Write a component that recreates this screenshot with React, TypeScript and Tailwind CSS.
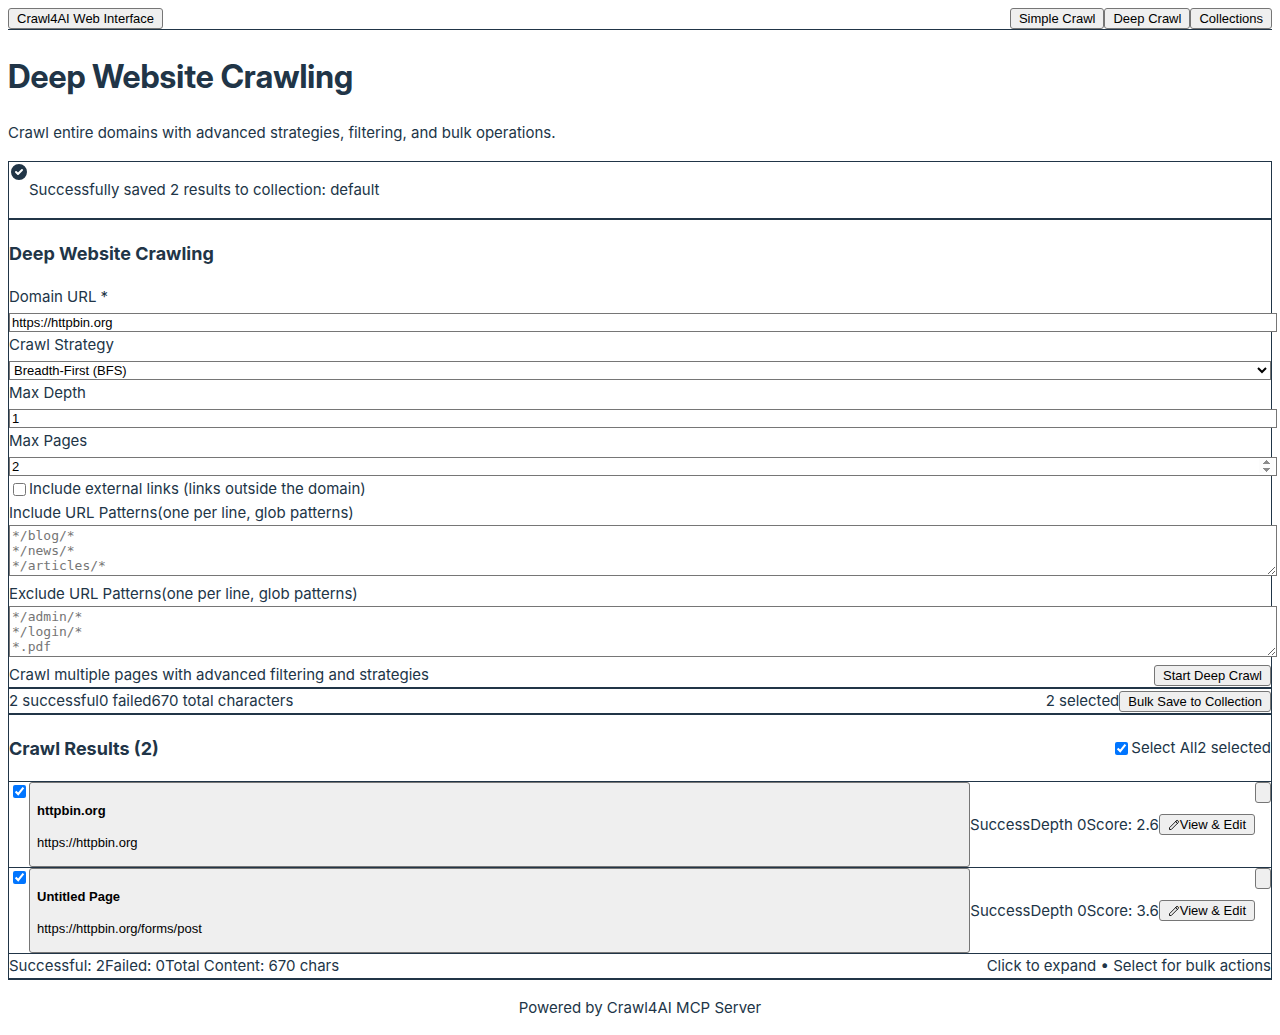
import React, { useState } from "react";

const buttonClass =
  "rounded-[3px] border border-[#767676] bg-[#efefef] px-2 py-[2px] font-['Liberation_Sans',sans-serif] text-[13px] leading-[15px] text-black";

const fieldClass =
  "mt-1 mb-px block w-[calc(100%+6px)] border border-[#767676] bg-white px-[2px] py-px font-['Liberation_Sans',sans-serif] text-[13px] leading-[15px] text-black";

const areaClass =
  "mb-[6px] block w-[calc(100%+6px)] resize border border-[#767676] bg-white p-[2px] font-['DejaVu_Sans_Mono',monospace] text-[13px] leading-[15px] text-black placeholder:text-[#757575]";

const checkboxClass = "ml-1 mr-[3px] size-[13px]";

function CheckCircleIcon() {
  return (
    <svg viewBox="0 0 20 20" fill="currentColor" className="size-5 shrink-0" aria-hidden="true">
      <path
        fillRule="evenodd"
        clipRule="evenodd"
        d="M10 18a8 8 0 100-16 8 8 0 000 16zm3.707-9.293a1 1 0 00-1.414-1.414L9 10.586 7.707 9.293a1 1 0 00-1.414 1.414l2 2a1 1 0 001.414 0l4-4z"
      />
    </svg>
  );
}

function PencilIcon() {
  return (
    <svg viewBox="0 0 24 24" fill="none" stroke="currentColor" className="size-3" aria-hidden="true">
      <path
        strokeLinecap="round"
        strokeLinejoin="round"
        strokeWidth={1.75}
        d="M15.232 5.232l3.536 3.536m-2.036-5.036a2.5 2.5 0 113.536 3.536L6.5 21.036H3v-3.572L16.732 3.732z"
      />
    </svg>
  );
}

type Result = { title: string; url: string; score: string };

const results: Result[] = [
  { title: "httpbin.org", url: "https://httpbin.org", score: "2.6" },
  { title: "Untitled Page", url: "https://httpbin.org/forms/post", score: "3.6" },
];

function ResultRow({ result }: { result: Result }) {
  return (
    <div className="flex items-start border-b border-[#213547]">
      <input
        type="checkbox"
        defaultChecked
        aria-label={`Select ${result.title}`}
        className={`${checkboxClass} mt-[3px]`}
      />
      <button
        type="button"
        className="min-w-0 flex-1 rounded-[3px] border border-[#767676] bg-[#efefef] px-[7px] pt-5 pb-4 text-left font-['Liberation_Sans',sans-serif] text-[13px] leading-[15px] text-black"
      >
        <span className="mb-[17px] block font-bold">{result.title}</span>
        <span className="block">{result.url}</span>
      </button>
      <div className="flex items-center self-stretch">
        <span>Success</span>
        <span>Depth 0</span>
        <span>Score: {result.score}</span>
        <button type="button" className={`${buttonClass} flex items-center`}>
          <PencilIcon />
          View &amp; Edit
        </button>
      </div>
      <button
        type="button"
        aria-label="Toggle details"
        className="h-[21px] w-4 rounded-[3px] border border-[#767676] bg-[#efefef]"
      />
    </div>
  );
}

export default function App() {
  const [strategy, setStrategy] = useState("bfs");

  return (
    <div className="p-2 font-[Inter,sans-serif] text-[15px] leading-6 text-[#213547]">
      <nav className="flex justify-between border-b border-[#213547]">
        <button type="button" className={buttonClass}>Crawl4AI Web Interface</button>
        <div className="flex">
          <button type="button" className={buttonClass}>Simple Crawl</button>
          <button type="button" className={buttonClass}>Deep Crawl</button>
          <button type="button" className={buttonClass}>Collections</button>
        </div>
      </nav>

      <main>
        <h1 className="mt-[23px] mb-5 font-['Inter_Display',Inter,sans-serif] text-[32px] leading-[48px] font-bold">
          Deep Website Crawling
        </h1>
        <p className="mb-4">Crawl entire domains with advanced strategies, filtering, and bulk operations.</p>

        <div role="status" className="flex border border-[#213547]">
          <CheckCircleIcon />
          <p className="my-4">Successfully saved 2 results to collection: default</p>
        </div>

        <form className="border border-[#213547]" onSubmit={(e) => e.preventDefault()}>
          <h3 className="mt-5 mb-[17px] text-lg leading-7 font-bold">Deep Website Crawling</h3>

          <label htmlFor="domain" className="block">Domain URL *</label>
          <input id="domain" type="url" defaultValue="https://httpbin.org" className={fieldClass} />

          <label htmlFor="strategy" className="block">Crawl Strategy</label>
          <select
            id="strategy"
            value={strategy}
            onChange={(e) => setStrategy(e.target.value)}
            className="mt-1 mb-px block h-[19px] w-full border border-[#767676] bg-white font-['Liberation_Sans',sans-serif] text-[13px] leading-[15px] text-black"
          >
            <option value="bfs">Breadth-First (BFS)</option>
            <option value="dfs">Depth-First (DFS)</option>
            <option value="best">Best-First</option>
          </select>

          <label htmlFor="depth" className="block">Max Depth</label>
          <input id="depth" type="number" defaultValue={1} className={fieldClass} />

          <label htmlFor="pages" className="block">Max Pages</label>
          <input
            id="pages"
            type="number"
            defaultValue={2}
            className={`${fieldClass} [&::-webkit-inner-spin-button]:opacity-100`}
          />

          <div className="flex items-center">
            <input id="external" type="checkbox" className={checkboxClass} />
            <label htmlFor="external">Include external links (links outside the domain)</label>
          </div>

          <label htmlFor="include" className="block">
            Include URL Patterns<span>(one per line, glob patterns)</span>
          </label>
          <textarea id="include" rows={3} placeholder={"*/blog/*\n*/news/*\n*/articles/*"} className={areaClass} />

          <label htmlFor="exclude" className="block">
            Exclude URL Patterns<span>(one per line, glob patterns)</span>
          </label>
          <textarea id="exclude" rows={3} placeholder={"*/admin/*\n*/login/*\n*.pdf"} className={areaClass} />

          <div className="flex items-center justify-between">
            <span>Crawl multiple pages with advanced filtering and strategies</span>
            <button type="submit" className={buttonClass}>Start Deep Crawl</button>
          </div>
        </form>

        <section className="flex items-center justify-between border border-[#213547]">
          <div className="flex">
            <span>2 successful</span>
            <span>0 failed</span>
            <span>670 total characters</span>
          </div>
          <div className="flex items-center">
            <span>2 selected</span>
            <button type="button" className={buttonClass}>Bulk Save to Collection</button>
          </div>
        </section>

        <section className="border border-b-2 border-[#213547]">
          <div className="flex items-center justify-between border-b border-[#213547]">
            <h3 className="mt-5 mb-[18px] text-lg leading-7 font-bold">Crawl Results (2)</h3>
            <div className="flex items-center">
              <input id="select-all" type="checkbox" defaultChecked className={checkboxClass} />
              <label htmlFor="select-all">Select All</label>
              <span>2 selected</span>
            </div>
          </div>
          {results.map((result) => (
            <ResultRow key={result.url} result={result} />
          ))}
          <div className="flex justify-between">
            <div className="flex">
              <span>Successful: 2</span>
              <span>Failed: 0</span>
              <span>Total Content: 670 chars</span>
            </div>
            <span>Click to expand • Select for bulk actions</span>
          </div>
        </section>
      </main>

      <footer className="mt-4 text-center">Powered by Crawl4AI MCP Server</footer>
    </div>
  );
}
